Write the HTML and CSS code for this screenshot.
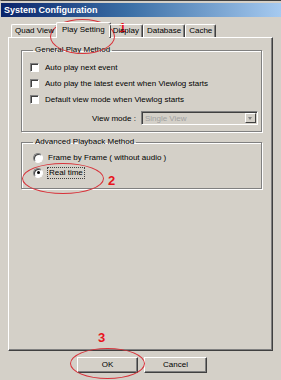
FILE: index.html
```html
<!DOCTYPE html>
<html lang="en">
<head>
    <meta charset="UTF-8">
    <title>System Configuration</title>
    <link rel="stylesheet" href="styles.css">
</head>
<body>
    <div class="window">
        <div class="titlebar">System Configuration</div>
        <div class="tabs">
            <div class="tab">Quad View</div>
            <div class="tab active">Play Setting</div>
            <div class="tab">Display</div>
            <div class="tab">Database</div>
            <div class="tab">Cache</div>
        </div>
        <div class="panel">
            <fieldset class="group general">
                <legend>General Play Method</legend>
                <div class="row"><span class="check"></span>Auto play next event</div>
                <div class="row"><span class="check"></span>Auto play the latest event when Viewlog starts</div>
                <div class="row"><span class="check"></span>Default view mode when Viewlog starts</div>
                <div class="viewmode">
                    <span class="label">View mode :</span>
                    <div class="select">
                        <span>Single View</span>
                        <span class="arrow"></span>
                    </div>
                </div>
            </fieldset>
            <fieldset class="group advanced">
                <legend>Advanced Playback Method</legend>
                <div class="row radio-row"><span class="radio"></span>Frame by Frame ( without audio )</div>
                <div class="row radio-row"><span class="radio on"></span><span class="focus">Real time</span></div>
            </fieldset>
        </div>
        <div class="buttons">
            <div class="btn">OK</div>
            <div class="btn">Cancel</div>
        </div>

        <!-- red annotations drawn over the dialog -->
        <div class="ring ring1"></div>
        <div class="ring ring2"></div>
        <div class="ring ring3"></div>
        <span class="num num1">1</span>
        <span class="num num2">2</span>
        <span class="num num3">3</span>
    </div>
</body>
</html>
```

FILE: styles.css
```css
body {
    margin: 0;
    background: #d4d0c8;
    font-family: "Liberation Sans", Arial, sans-serif;
    font-size: 8px;
    color: #000;
}
.window {
    position: relative;
    width: 281px;
    height: 380px;
    box-sizing: border-box;
    border-top: 1px solid #404040;
    border-left: 1px solid #d4d0c8;
    background: #d4d0c8;
    overflow: hidden;
}
.titlebar {
    margin-top: 2px;
    height: 14px;
    line-height: 14px;
    padding-left: 3px;
    background: linear-gradient(to right, #0a246a, #3a6ea5 45%, #a6caf0);
    color: #fff;
    font-weight: bold;
    font-size: 9px;
}
.tabs {
    display: flex;
    align-items: flex-end;
    height: 20px;
    padding-left: 10px;
    position: relative;
    z-index: 1;
}
.tab {
    height: 12px;
    line-height: 12px;
    padding: 0 3px;
    border: 1px solid #fff;
    border-right-color: #404040;
    border-bottom: none;
    border-radius: 2px 2px 0 0;
    box-shadow: inset -1px 0 #808080;
}
.tab.active {
    height: 15px;
    line-height: 14px;
    margin: 0 -2px -1px;
    padding: 0 5px;
    background: #d4d0c8;
}
.panel {
    margin-left: 7px;
    width: 265px;
    height: 314px;
    box-sizing: border-box;
    padding: 7px 10px 0 12px;
    border: 1px solid #fff;
    border-right-color: #404040;
    border-bottom-color: #404040;
    box-shadow: inset -1px -1px #808080;
}
.group {
    margin: 0;
    padding: 4px 0 6px 8px;
    border: 1px solid #808080;
    box-shadow: inset 1px 1px #fff, 1px 1px #fff;
}
.group legend {
    padding: 0 2px;
    margin-left: 3px;
    line-height: 10px;
}
.group.advanced {
    margin-top: 5px;
    padding: 3px 0 8px 8px;
}
.row {
    display: flex;
    align-items: center;
    height: 16px;
}
.radio-row {
    height: 15px;
}
.check {
    width: 7px;
    height: 7px;
    margin-right: 6px;
    background: #fff;
    border: 1px solid #808080;
    border-right-color: #fff;
    border-bottom-color: #fff;
    box-shadow: inset 1px 1px #404040;
}
.radio {
    position: relative;
    width: 8px;
    height: 8px;
    margin: 0 5px 0 3px;
    border-radius: 50%;
    background: #fff;
    border: 1px solid #808080;
    border-right-color: #fff;
    border-bottom-color: #fff;
    box-shadow: inset 1px 1px #404040;
}
.radio.on::after {
    content: "";
    position: absolute;
    left: 2.5px;
    top: 2.5px;
    width: 3px;
    height: 3px;
    border-radius: 50%;
    background: #000;
}
.focus {
    outline: 1px dotted #404040;
    padding: 0 1px;
    line-height: 10px;
}
.viewmode {
    display: flex;
    align-items: center;
    margin-top: 4px;
    padding-left: 62px;
    height: 14px;
}
.viewmode .label {
    margin-right: 5px;
}
.select {
    display: flex;
    align-items: center;
    justify-content: space-between;
    width: 117px;
    height: 14px;
    box-sizing: border-box;
    border: 1px solid #808080;
    border-right-color: #fff;
    border-bottom-color: #fff;
    box-shadow: inset 1px 1px #404040;
    color: #a0a0a0;
    padding: 0 1px 0 3px;
}
.arrow {
    position: relative;
    width: 11px;
    height: 10px;
    box-sizing: border-box;
    border: 1px solid #fff;
    border-right-color: #404040;
    border-bottom-color: #404040;
    background: #d4d0c8;
}
.arrow::after {
    content: "";
    position: absolute;
    left: 2px;
    top: 3px;
    border: 2.5px solid transparent;
    border-top: 3px solid #808080;
}
.buttons {
    display: flex;
    gap: 6px;
    padding-left: 76px;
    margin-top: 6px;
}
.btn {
    width: 61px;
    height: 16px;
    box-sizing: border-box;
    line-height: 14px;
    text-align: center;
    border: 1px solid #fff;
    border-right-color: #404040;
    border-bottom-color: #404040;
    box-shadow: inset -1px -1px #808080;
}
.btn + .btn {
    width: 63px;
}
.ring {
    position: absolute;
    border: 1px solid #d8323a;
    border-radius: 50%;
}
.ring1 { left: 49px; top: 18px; width: 63px; height: 33px; }
.ring2 { left: 21px; top: 162px; width: 80px; height: 29px; }
.ring3 { left: 69px; top: 347px; width: 73px; height: 29px; }
.num {
    position: absolute;
    color: #e8141c;
    font-weight: bold;
    font-size: 13px;
    line-height: 13px;
}
.num1 { left: 118px; top: 20px; }
.num2 { left: 107px; top: 173px; }
.num3 { left: 97px; top: 330px; }
```
